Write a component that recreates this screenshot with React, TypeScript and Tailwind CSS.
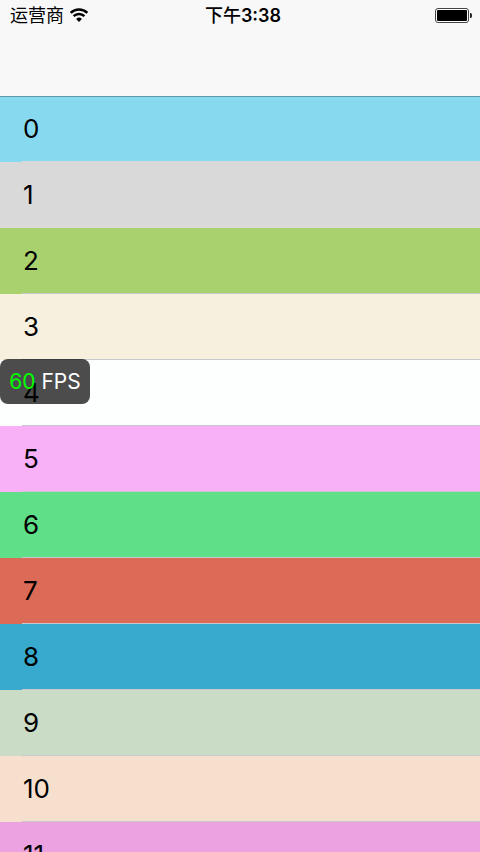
const rows = [
  { label: "0", color: "bg-[#87d9ef]", line: "border-[#d9d9d9]" },
  { label: "1", color: "bg-[#d9d9d9]", line: "border-transparent" },
  { label: "2", color: "bg-[#a9d26f]", line: "border-[#c8c7cc]" },
  { label: "3", color: "bg-[#f7f0de]", line: "border-[#c8c7cc]" },
  { label: "4", color: "bg-[#fdfefe]", line: "border-[#c8c7cc]" },
  { label: "5", color: "bg-[#f8b0f7]", line: "border-[#c8c7cc]" },
  { label: "6", color: "bg-[#5fdf88]", line: "border-[#c8c7cc]" },
  { label: "7", color: "bg-[#db6a56]", line: "border-[#c8c7cc]" },
  { label: "8", color: "bg-[#37aacd]", line: "border-[#c8c7cc]" },
  { label: "9", color: "bg-[#cbdcc6]", line: "border-[#c8c7cc]" },
  { label: "10", color: "bg-[#f7dfce]", line: "border-[#c8c7cc]" },
  { label: "11", color: "bg-[#eca2e0]", line: "border-[#c8c7cc]" },
];

function WifiIcon() {
  return (
    <svg width="18" height="16" viewBox="0 0 18 16" fill="none" stroke="#000" aria-label="Wi-Fi">
      <path d="M0.7 4.900a11.8 11.8 0 0 1 16.6 0" strokeWidth="2.5" />
      <path d="M3.600 8.200a7.6 7.6 0 0 1 10.800 0" strokeWidth="2.4" />
      <path d="M9 14 6.100 11a4.100 4.100 0 0 1 5.800 0Z" fill="#000" stroke="none" />
    </svg>
  );
}

function BatteryIcon() {
  return (
    <svg width="37" height="16" viewBox="0 0 37 16" aria-label="Battery">
      <rect x="0.5" y="0.5" width="33" height="14" rx="2.5" fill="#fff" stroke="#444" />
      <rect x="2" y="2" width="30" height="11" rx="1" fill="#000" />
      <path d="M35 5h1q1 .5 1 2.500t-1 2.500h-1z" fill="#222" />
    </svg>
  );
}

function StatusBar() {
  return (
    <div className="grid h-8 grid-cols-3 items-center pr-2 pl-2.5 text-lg leading-8">
      <div className="flex items-center gap-1.5 whitespace-nowrap">
        <span>运营商</span>
        <WifiIcon />
      </div>
      <span className="pl-1 text-center font-semibold whitespace-nowrap">
        <span className="font-medium">下午</span>3:38
      </span>
      <div className="flex justify-end">
        <BatteryIcon />
      </div>
    </div>
  );
}

function FpsBadge() {
  return (
    <div className="absolute top-[359px] left-0 z-20 h-[45px] w-[90px] rounded-lg bg-black/70 text-center text-[21px] leading-[46px] whitespace-nowrap text-white">
      <span className="text-[#00ff00]">60</span> FPS
    </div>
  );
}

export default function App() {
  return (
    <div className="relative flex h-screen flex-col overflow-hidden bg-white font-['Inter','Noto_Sans_CJK_SC',sans-serif] text-black">
      <header className="relative z-10 h-24 shrink-0 bg-[#f8f8f8] shadow-[0_1px_0_#5f98a8]">
        <StatusBar />
      </header>
      <main className="min-h-0 flex-1 overflow-hidden">
        <ul>
          {rows.map((row) => (
            <li key={row.label} className={`h-[66px] pl-[22px] ${row.color}`}>
              <div className={`h-full border-b pl-px text-[26px] leading-[66px] ${row.line}`}>
                {row.label}
              </div>
            </li>
          ))}
        </ul>
      </main>
      <FpsBadge />
    </div>
  );
}
